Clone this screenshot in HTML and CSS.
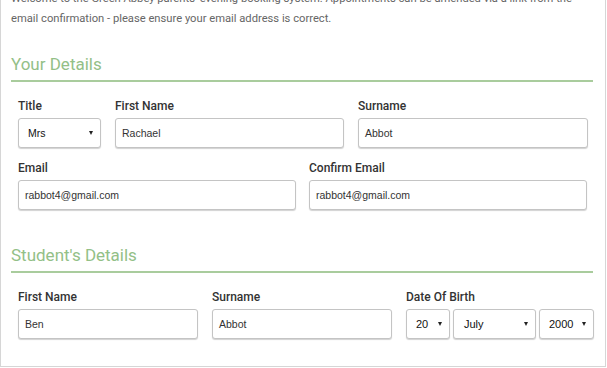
FILE: index.html
```html
<!DOCTYPE html>
<html>
<head>
<meta charset="utf-8">
<link rel="stylesheet" href="styles.css">
</head>
<body>
<div class="frame">
  <p class="intro">Welcome to the Green Abbey parents' evening booking system. Appointments can be amended via a link from the email confirmation - please ensure your email address is correct.</p>

  <section class="section">
    <h2 class="heading">Your Details</h2>
    <div class="row row-name">
      <div class="field">
        <label class="label">Title</label>
        <div class="select"><span>Mrs</span><i class="caret"></i></div>
      </div>
      <div class="field">
        <label class="label">First Name</label>
        <div class="input pad-name">Rachael</div>
      </div>
      <div class="field">
        <label class="label">Surname</label>
        <div class="input pad-name">Abbot</div>
      </div>
    </div>
    <div class="row row-email">
      <div class="field">
        <label class="label">Email</label>
        <div class="input">rabbot4@gmail.com</div>
      </div>
      <div class="field">
        <label class="label">Confirm Email</label>
        <div class="input">rabbot4@gmail.com</div>
      </div>
    </div>
  </section>

  <section class="section student">
    <h2 class="heading">Student's Details</h2>
    <div class="row row-student">
      <div class="field">
        <label class="label">First Name</label>
        <div class="input">Ben</div>
      </div>
      <div class="field">
        <label class="label">Surname</label>
        <div class="input">Abbot</div>
      </div>
      <div class="field">
        <label class="label">Date Of Birth</label>
        <div class="dob">
          <div class="select small"><span>20</span><i class="caret"></i></div>
          <div class="select small"><span>July</span><i class="caret"></i></div>
          <div class="select small"><span>2000</span><i class="caret"></i></div>
        </div>
      </div>
    </div>
  </section>
</div>
</body>
</html>
```

FILE: styles.css
```css
html, body {
  margin: 0;
  padding: 0;
  background: #ffffff;
}

.frame {
  width: 606px;
  height: 388px;
  margin-top: -21px;
  border: 1px solid #d6d6d6;
  box-sizing: border-box;
  padding: 9px 10px 0 10px;
  font-family: Roboto, "Noto Sans", sans-serif;
}

.intro {
  margin: 0;
  font-size: 11.2px;
  line-height: 20px;
  color: #666666;
  width: 585px;
}

.section {
  margin-top: 23px;
}

.student {
  margin-top: 33px;
}

.heading {
  margin: 0;
  font-weight: 400;
  font-size: 17px;
  line-height: 24px;
  color: #93c087;
  padding-bottom: 4px;
  border-bottom: 2px solid #a9cc9d;
  width: 582px;
}

.row {
  display: grid;
  padding-left: 7px;
  margin-top: 17px;
}

.row-name {
  grid-template-columns: 83px 229px 230px;
  column-gap: 14px;
}

.row-email {
  grid-template-columns: 278px 278px;
  column-gap: 13px;
  margin-top: 13px;
}

.row-student {
  grid-template-columns: 180px 180px 188px;
  column-gap: 14px;
}

.field {
  display: flex;
  flex-direction: column;
}

.label {
  font-size: 12px;
  font-weight: 500;
  color: #333333;
  line-height: 14px;
  margin-bottom: 5px;
}

.input, .select {
  height: 30px;
  box-sizing: border-box;
  border: 1px solid #c4c4c4;
  border-radius: 3px;
  box-shadow: 0 1px 1px rgba(0, 0, 0, 0.18);
  background: #ffffff;
  font-family: "Liberation Sans", Arial, sans-serif;
  font-size: 10.5px;
  color: #333333;
  display: flex;
  align-items: center;
  padding-left: 6px;
}

.pad-name {
  padding-left: 6px;
}

.select {
  position: relative;
  padding-left: 9px;
  color: #111111;
}

.caret {
  position: absolute;
  right: 7px;
  top: 12px;
  width: 0;
  height: 0;
  border-left: 2.5px solid transparent;
  border-right: 2.5px solid transparent;
  border-top: 4px solid #222222;
}

.dob {
  display: grid;
  grid-template-columns: 44px 83px 55px;
  column-gap: 3px;
}

.select.small {
  padding-left: 9px;
  font-size: 11px;
}

.select.small:nth-child(2) {
  padding-left: 10px;
}
```
